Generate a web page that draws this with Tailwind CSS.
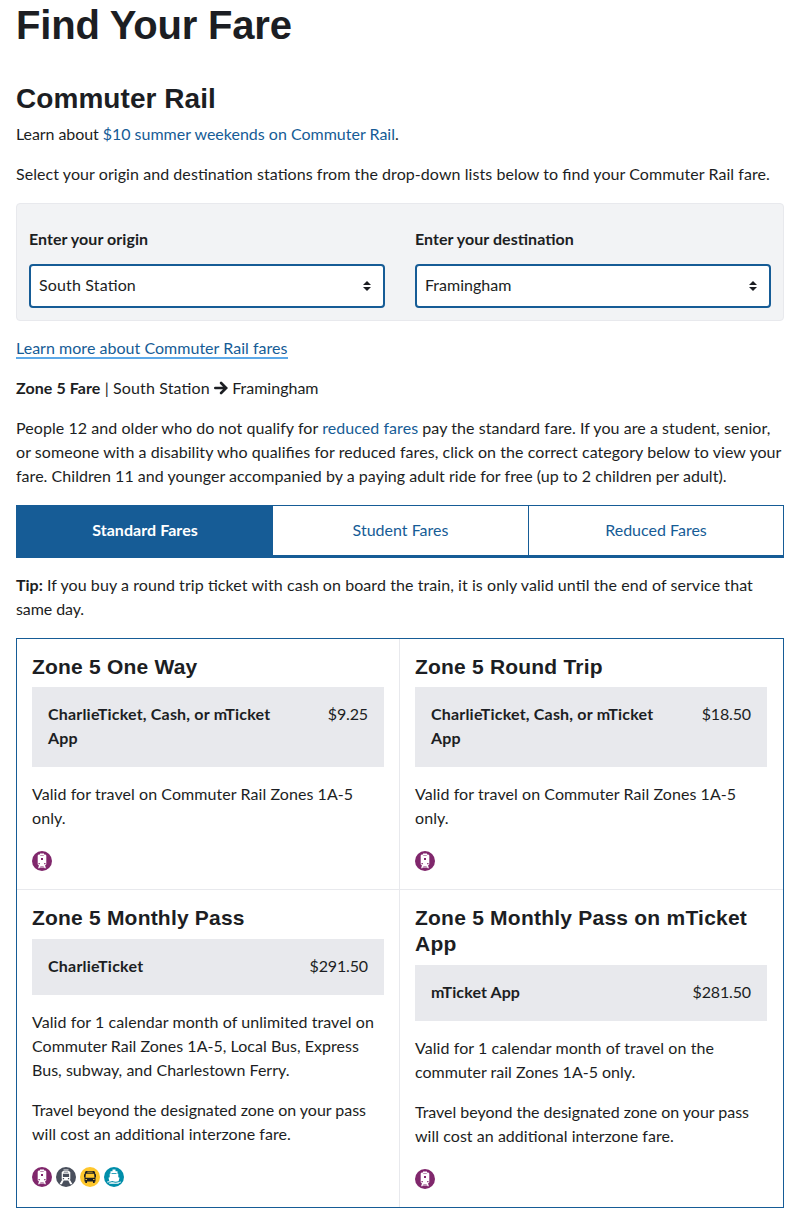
<!DOCTYPE html>
<html lang="en">
<head>
<meta charset="utf-8">
<title>Find Your Fare</title>
<script src="https://cdn.jsdelivr.net/npm/@tailwindcss/browser@4"></script>
</head>
<body class="bg-white font-[Lato,sans-serif] text-base leading-6 text-[#1c1e23] [font-feature-settings:'liga'_1]">
<svg class="hidden" xmlns="http://www.w3.org/2000/svg">
  <symbol id="rail" viewBox="0 0 20 20">
    <circle cx="10" cy="10" r="10" fill="#80276c"/>
    <path fill="#fff" d="M8 2.600h4v.8h1.400l.9 1v8.900l-.8 1h-.5l.9 2.900h-1.300l-.3-.8H7.700l-.3.8H6.100l.9-2.900h-.5l-.8-1V4.400l.9-1H8z"/>
    <path fill="#80276c" d="M8.200 4.100h3.600v.5H8.200zM9 7h2v2H9zM6.500 12h1.300v1.300H6.500zM12.200 12h1.300v1.300h-1.300zM8.300 14.900h3.400v.6H8.300z"/>
  </symbol>
  <symbol id="subway" viewBox="0 0 20 20">
    <circle cx="10" cy="10" r="10" fill="#494f5c"/>
    <path fill="#fff" d="M7.500 2.600h5v.8h-5zM7 4h6l1.300 1.300v7l-1 1.200H6.700l-1-1.200v-7zM5.800 13.300h2l-1.900 3.900H3.500zM12.200 13.300h2l2.300 3.900h-2.400z"/>
    <path fill="#494f5c" d="M7.800 4.700h4.400v.9H7.800zM6.900 6.700h6.200v3.200H6.900zM6.800 11h1.300v1.300H6.800zM11.900 11h1.300v1.300h-1.300z"/>
  </symbol>
  <symbol id="bus" viewBox="0 0 20 20">
    <circle cx="10" cy="10" r="10" fill="#ffc72c"/>
    <path fill="#1c1e23" d="M6 4h8l1 .9.300 2.300h.7v3h-.5v4.300h-.8V16H13v-1.500H7V16H5.300v-1.500h-.8v-4.300H4v-3h.7L5 4.900z"/>
    <path fill="#ffc72c" d="M7.300 4.800h5.400v.8H7.300zM5.900 6.700h8.200l.4 4H5.500zM5.500 12h1.400v1.100H5.500zM13.100 12h1.400v1.100h-1.400z"/>
  </symbol>
  <symbol id="ferry" viewBox="0 0 20 20">
    <circle cx="10" cy="10" r="10" fill="#008eaa"/>
    <path fill="#fff" d="M8.500 2.600h3v1.600h2v2.600h.8v3.400l1.200.5-.8 3.300H5.300l-.8-3.300 1.200-.5V6.800h.8V4.200h2zM3.200 14.600q1.700-.8 3.400 0t3.400 0 3.400 0 3.400 0v.9q-1.700.7-3.400 0t-3.400 0-3.400 0-3.400 0zM4.800 16.300h10.400l-.8.800H5.600z"/>
    <path fill="#008eaa" d="M7.500 6h5v.8h-5z"/>
  </symbol>
  <symbol id="sort" viewBox="0 0 8 10">
    <path fill="#1c1e23" d="M4 0l4 4H0zM4 10L0 6h8z"/>
  </symbol>
</svg>
<main class="flex flex-col px-4">
  <h1 class="mt-px h-12 font-['Liberation_Sans',sans-serif] text-[40px] leading-12 font-bold tracking-[-.2px]">Find Your Fare</h1>
  <h2 class="mt-8 h-[35px] font-['Liberation_Sans',sans-serif] text-[28px] leading-[35px] font-bold tracking-[.06px]">Commuter Rail</h2>
  <p class="mt-1.5"><span class="tracking-[-.08px]">Learn about </span><a class="text-[#165c96]">$10 summer weekends on Commuter Rail</a>.</p>
  <p class="mt-4 tracking-[.066px]">Select your origin and destination stations from the drop-down lists below to find your Commuter Rail fare.</p>
  <section class="mt-[17px] grid h-[118px] grid-cols-2 gap-[30px] rounded border border-[#e8e9ed] bg-[#f2f3f5] px-3 pt-[23px]">
    <div>
      <div class="font-bold tracking-[.06px]">Enter your origin</div>
      <div class="mt-[13px] flex h-11 items-center justify-between rounded border-2 border-[#165c96] bg-white pr-3 pl-2"><span class="pb-0.5 tracking-[.15px]">South Station</span><svg class="h-2.5 w-2"><use href="#sort"/></svg></div>
    </div>
    <div>
      <div class="font-bold tracking-[.05px]">Enter your destination</div>
      <div class="mt-[13px] flex h-11 items-center justify-between rounded border-2 border-[#165c96] bg-white pr-3 pl-2"><span class="pb-0.5">Framingham</span><svg class="h-2.5 w-2"><use href="#sort"/></svg></div>
    </div>
  </section>
  <p class="mt-[15px]"><a class="border-b-2 border-[#5da9e8] tracking-[.03px] text-[#165c96]">Learn more about Commuter Rail fares</a></p>
  <p class="mt-4"><b class="tracking-[.08px]">Zone 5 Fare</b><span class="tracking-[.14px]"> | South Station </span><svg class="inline h-3.5 w-3.5 align-[-1px]" viewBox="0 0 14 14"><path d="M1.300 7h10.500M7.100 2L12.200 7l-5.100 5" fill="none" stroke="#1c1e23" stroke-width="2.600" stroke-linecap="round"/></svg> Framingham</p>
  <p class="mt-4 tracking-[.06px]">People 12 and older who do not qualify for <a class="text-[#165c96]">reduced fares</a> pay the standard fare. If you are a student, senior,<br>or someone with a disability who qualifies for reduced fares, click on the correct category below to view your<br><span class="tracking-[.04px]">fare. Children 11 and younger accompanied by a paying adult ride for free (up to 2 children per adult).</span></p>
  <nav class="mt-[17px] grid h-[53px] grid-cols-[256px_256px_254px] border border-b-3 border-[#165c96] text-center leading-[48px] text-[#165c96]">
    <a class="bg-[#165c96] font-bold tracking-[.06px] text-white">Standard Fares</a>
    <a class="border-r border-[#165c96]">Student Fares</a>
    <a>Reduced Fares</a>
  </nav>
  <p class="mt-[15px] tracking-[.073px]"><b class="tracking-normal">Tip:</b> If you buy a round trip ticket with cash on board the train, it is only valid until the end of service that <span class="tracking-[-.08px]">same day.</span></p>
  <section class="mt-[17px] grid h-[570px] grid-cols-[383px_383px] grid-rows-[251px_317px] border border-[#165c96]">
    <article class="border-r border-b border-[#e8e9ed] px-[15px] pt-[15px]">
      <h3 class="font-['Liberation_Sans',sans-serif] text-[21px] leading-[26px] font-bold tracking-[.2px]">Zone 5 One Way</h3>
      <div class="mt-[7px] flex justify-between bg-[#e8e9ed] px-4 pt-[15px] pb-[17px]"><b class="w-60 tracking-[.19px]">CharlieTicket, Cash, or mTicket App</b><span class="tracking-[-.15px]">$9.25</span></div>
      <p class="mt-[15px] tracking-[.07px]">Valid for travel on Commuter Rail Zones 1A-5 only.</p>
      <svg class="mt-[21px] size-5"><use href="#rail"/></svg>
    </article>
    <article class="border-b border-[#e8e9ed] pt-[15px] pr-4 pl-[15px]">
      <h3 class="font-['Liberation_Sans',sans-serif] text-[21px] leading-[26px] font-bold tracking-[.2px]">Zone 5 Round Trip</h3>
      <div class="mt-[7px] flex justify-between bg-[#e8e9ed] px-4 pt-[15px] pb-[17px]"><b class="w-60 tracking-[.19px]">CharlieTicket, Cash, or mTicket App</b><span class="tracking-[-.15px]">$18.50</span></div>
      <p class="mt-[15px] tracking-[.07px]">Valid for travel on Commuter Rail Zones 1A-5 only.</p>
      <svg class="mt-[21px] size-5"><use href="#rail"/></svg>
    </article>
    <article class="border-r border-[#e8e9ed] px-[15px] pt-[15px]">
      <h3 class="font-['Liberation_Sans',sans-serif] text-[21px] leading-[26px] font-bold tracking-[.2px]">Zone 5 Monthly Pass</h3>
      <div class="mt-2 flex justify-between bg-[#e8e9ed] px-4 pt-[15px] pb-[17px]"><b class="tracking-[.23px]">CharlieTicket</b><span class="tracking-[-.15px]">$291.50</span></div>
      <p class="mt-[15px]"><span class="tracking-[.075px]">Valid for 1 calendar month of unlimited travel on</span> <span class="tracking-[.025px]">Commuter Rail Zones 1A-5, Local Bus, Express Bus, subway, and Charlestown Ferry.</span></p>
      <p class="mt-4"><span class="tracking-[-.025px]">Travel beyond the designated zone on your pass</span> <span class="tracking-[.04px]">will cost an additional interzone fare.</span></p>
      <div class="mt-[21px] flex gap-1"><svg class="size-5"><use href="#rail"/></svg><svg class="size-5"><use href="#subway"/></svg><svg class="size-5"><use href="#bus"/></svg><svg class="size-5"><use href="#ferry"/></svg></div>
    </article>
    <article class="pt-[15px] pr-4 pl-[15px]">
      <h3 class="font-['Liberation_Sans',sans-serif] text-[21px] leading-[26px] font-bold tracking-[.23px]">Zone 5 Monthly Pass on mTicket App</h3>
      <div class="mt-2 flex justify-between bg-[#e8e9ed] px-4 pt-[15px] pb-[17px]"><b class="tracking-[.1px]">mTicket App</b><span class="tracking-[-.15px]">$281.50</span></div>
      <p class="mt-[15px]"><span class="tracking-[.075px]">Valid for 1 calendar month of travel on the</span> commuter rail Zones 1A-5 only.</p>
      <p class="mt-4"><span class="tracking-[-.025px]">Travel beyond the designated zone on your pass</span> <span class="tracking-[.04px]">will cost an additional interzone fare.</span></p>
      <svg class="mt-[21px] size-5"><use href="#rail"/></svg>
    </article>
  </section>
</main>
</body>
</html>
